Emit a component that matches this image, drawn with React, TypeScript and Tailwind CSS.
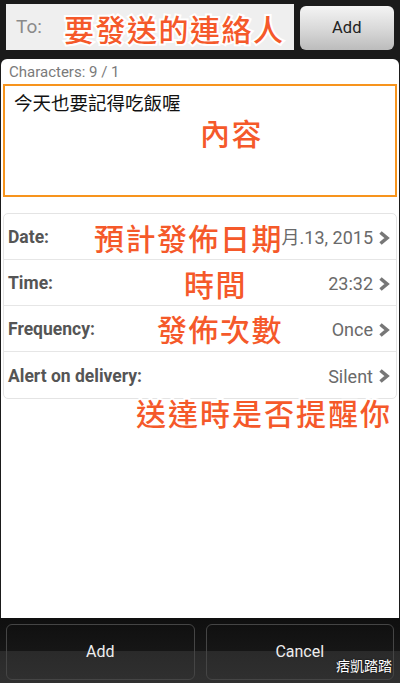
import type { ReactNode } from 'react'

const cjk = "font-['Noto_Sans_CJK_TC','Noto_Sans_CJK_SC',sans-serif]"
const ui = "font-['Roboto','Noto_Sans_CJK_TC',sans-serif]"

// 橘色標註字（白色描邊）
const Note = ({ className, children }: { className: string; children: ReactNode }) => (
	<span
		className={`pointer-events-none absolute whitespace-nowrap text-[30px] leading-none font-medium tracking-[1.5px] text-[#f5592a] [-webkit-text-stroke:4px_white] [paint-order:stroke_fill] ${cjk} ${className}`}
	>
		{children}
	</span>
)

const Chevron = () => (
	<svg width="12" height="14" viewBox="0 0 12 14" className="ml-[5px] shrink-0">
		<polyline points="2.5,1.5 9,7 2.5,12.5" fill="none" stroke="#777" strokeWidth="3.6" />
	</svg>
)

const Row = ({
	label,
	value,
	last,
	children,
}: {
	label: string
	value: string
	last?: boolean
	children?: ReactNode
}) => (
	<div
		className={`relative flex h-[46px] items-center pt-[2px] pr-[6px] pl-[4px] ${last ? '' : 'border-b border-[#e6e6e6]'}`}
	>
		<span className="text-[17.5px] font-bold text-[#555]">{label}</span>
		<span className="ml-auto text-[18px] text-[#6a6a6a]">{value}</span>
		<Chevron />
		{children}
	</div>
)

export default function App() {
	return (
		<div className={`relative flex h-[683px] w-[400px] flex-col overflow-hidden bg-[#1b1b1b] ${ui}`}>
			{/* 上方收件人 */}
			<div className="flex h-[59px] shrink-0 px-[6px] pt-[4px]">
				<div className="relative flex h-[46px] w-[292px] items-center bg-[#efefef] pl-[10px]">
					<span className="text-[19px] text-[#8a8a8a]">To:</span>
					<Note className="top-[9px] left-[58px]">要發送的連絡人</Note>
				</div>
				<button
					type="button"
					className="mt-[2px] ml-[6px] flex h-[44px] w-[96px] items-center justify-center rounded-[6px] bg-[linear-gradient(#f4f4f4,#dadada_50%,#bcbcbc)] text-[16.5px] text-[#222]"
				>
					Add
				</button>
			</div>

			{/* 主內容 */}
			<div className="mx-[1px] flex flex-1 flex-col rounded-t-[6px] bg-white px-[2px]">
				<div className="pt-[4px] pl-[6px] text-[15px] leading-[18px] text-[#7a7a7a]">Characters: 9 / 1</div>
				<div className="relative mt-[3px] h-[113px] border-2 border-[#f7941d] px-[9px] pt-[3px]">
					<span className={`text-[18.5px] text-[#111] ${cjk}`}>今天也要記得吃飯喔</span>
					<Note className="top-[31px] left-[195px]">內容</Note>
				</div>

				<div className="relative mt-[16px] rounded-[5px] border border-[#e4e4e4]">
					<Row label="Date:" value="月.13, 2015">
						<Note className="top-[8px] left-[90px]">預計發佈日期</Note>
					</Row>
					<Row label="Time:" value="23:32">
						<Note className="top-[8px] left-[180px]">時間</Note>
					</Row>
					<Row label="Frequency:" value="Once">
						<Note className="top-[7px] left-[153px]">發佈次數</Note>
					</Row>
					<Row label="Alert on delivery:" value="Silent" last />
				</div>
				<div className="relative">
					<Note className="top-[-2px] left-[133px] tracking-[2px]">送達時是否提醒你</Note>
				</div>
			</div>

			{/* 下方按鈕列 */}
			<div className="relative flex h-[65px] shrink-0 gap-[11px] bg-[linear-gradient(#0f0f0f,#161616_50%,#2a2a2a_50%,#303030)] px-[6px] pt-[6px]">
				<button
					type="button"
					className="flex h-[56px] flex-1 items-center justify-center rounded-[6px] border border-[#454545] text-[16px] text-[#eee]"
				>
					Add
				</button>
				<button
					type="button"
					className="flex h-[56px] flex-1 items-center justify-center rounded-[6px] border border-[#454545] text-[16px] text-[#eee]"
				>
					Cancel
				</button>
				<span className={`absolute right-[8px] bottom-[11px] text-[14px] leading-none text-white [text-shadow:0_0_2px_#000] ${cjk}`}>
					痞凱踏踏
				</span>
			</div>
		</div>
	)
}
